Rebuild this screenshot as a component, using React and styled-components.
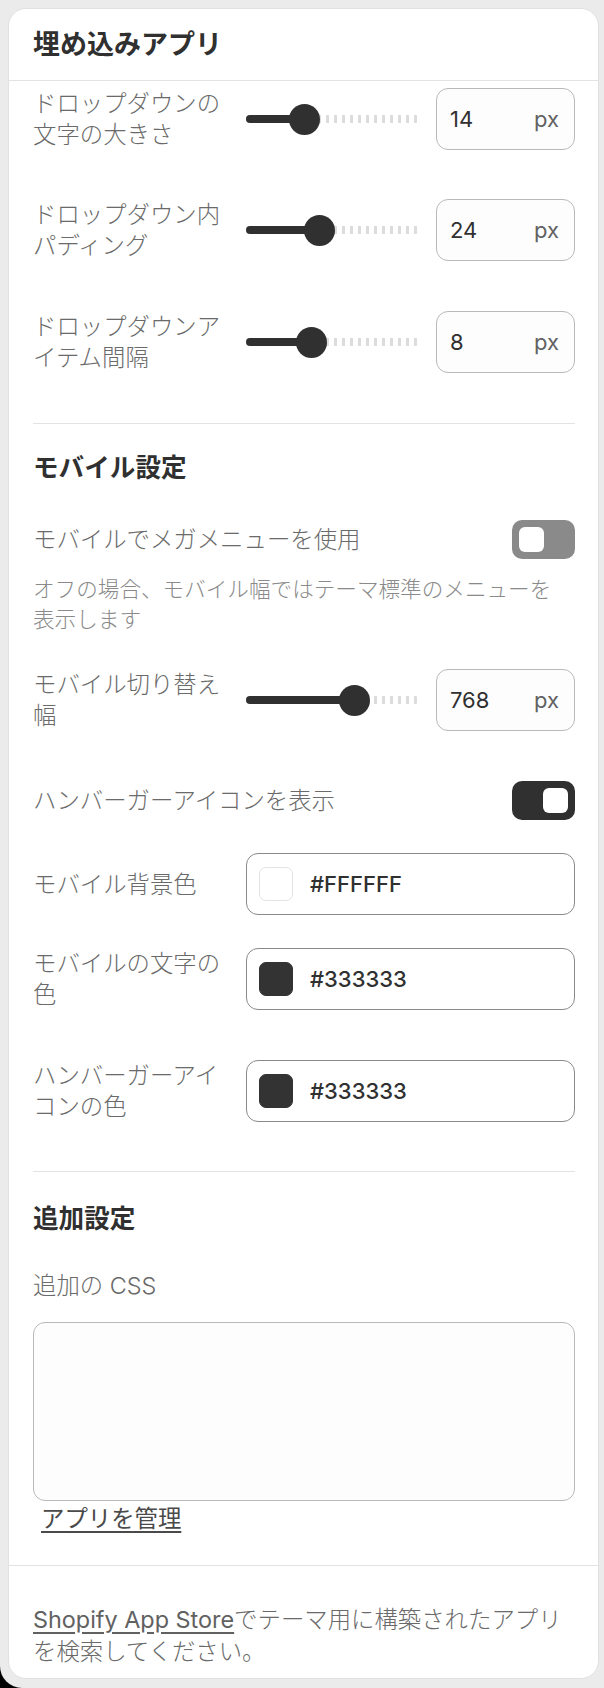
import React from 'react';
import styled, { createGlobalStyle } from 'styled-components';

const Global = createGlobalStyle`
  html, body { margin: 0; padding: 0; background: #000; }
  body {
    font-family: Inter, "Noto Sans CJK JP", sans-serif;
    -webkit-font-smoothing: antialiased;
  }
  * { box-sizing: border-box; }
`;

const Page = styled.div`
  width: 604px;
  height: 1688px;
  background: #ebebeb;
  border-bottom-left-radius: 22px;
  padding: 8px 0 0 8px;
  overflow: hidden;
`;

const Card = styled.div`
  width: 591px;
  background: #fff;
  border: 1px solid #e1e1e1;
  border-radius: 18px;
  overflow: hidden;
`;

const Header = styled.div`
  height: 72px;
  display: flex;
  align-items: center;
  padding: 0 23px 0 24px;
  border-bottom: 1px solid #e3e3e3;
`;

const Title = styled.h1`
  margin: 0;
  font-size: 27px;
  line-height: 36px;
  font-weight: 700;
  color: #303030;
`;

const Body = styled.div`
  padding: 7px 23px 31px 24px;
  display: flex;
  flex-direction: column;
`;

const Row = styled.div`
  display: flex;
  align-items: center;
  margin-top: ${(p) => p.$mt || 0}px;
  min-height: ${(p) => p.$h || 0}px;
`;

const SpreadRow = styled(Row)`
  justify-content: space-between;
`;

const Label = styled.div`
  flex: none;
  width: ${(p) => (p.$full ? 'auto' : '200px')};
  font-size: 23.4px;
  line-height: 31px;
  font-weight: 300;
  color: #6a6a6a;
`;

const Control = styled.div`
  flex: 1;
  margin-left: 13px;
  display: flex;
  align-items: center;
`;

const SliderTrack = styled.div`
  position: relative;
  flex: 1;
  height: 30px;
`;

const SliderRail = styled.div`
  position: absolute;
  left: 0;
  right: 0;
  top: 11px;
  height: 8px;
  border-radius: 4px;
  background: repeating-linear-gradient(
    to right,
    #dcdcdc 0 3px,
    transparent 3px 8px
  );
`;

const SliderFill = styled.div`
  position: absolute;
  left: 0;
  top: 11px;
  height: 8px;
  border-radius: 4px;
  background: #303030;
`;

const SliderThumb = styled.div`
  position: absolute;
  top: 0;
  width: 31px;
  height: 31px;
  margin-left: -15.5px;
  border-radius: 50%;
  background: #303030;
`;

const NumberBox = styled.div`
  flex: none;
  width: 139px;
  height: 62px;
  margin-left: 17px;
  padding: 0 15px 0 13px;
  display: flex;
  align-items: center;
  justify-content: space-between;
  border: 1px solid #b9b9b9;
  border-radius: 12px;
  background: #fdfdfd;
`;

const NumberValue = styled.span`
  font-size: 22px;
  color: #303030;
`;

const Unit = styled.span`
  font-size: 22px;
  color: #616161;
`;

const Toggle = styled.div`
  flex: none;
  width: 63px;
  height: 39px;
  padding: 0 7px;
  border-radius: 10px;
  display: flex;
  align-items: center;
  justify-content: ${(p) => (p.$on ? 'flex-end' : 'flex-start')};
  background: ${(p) => (p.$on ? '#303030' : '#8a8a8a')};
`;

const Knob = styled.div`
  width: 25px;
  height: 25px;
  border-radius: 6px;
  background: #fff;
`;

const Helper = styled.div`
  margin-top: ${(p) => p.$mt || 0}px;
  font-size: 21.6px;
  line-height: 30px;
  font-weight: 300;
  color: #8a8a8a;
`;

const ColorBox = styled.div`
  flex: 1;
  height: 62px;
  margin-left: 13px;
  padding: 0 12px;
  display: flex;
  align-items: center;
  gap: 17px;
  border: 1.5px solid #8a8a8a;
  border-radius: 12px;
  background: #fff;
`;

const Swatch = styled.div`
  width: 34px;
  height: 34px;
  border-radius: 7px;
  background: ${(p) => p.$color};
  border: 1px solid ${(p) => (p.$color === '#FFFFFF' ? '#e3e3e3' : p.$color)};
`;

const Hex = styled.span`
  font-size: 22px;
  font-weight: 500;
  color: #303030;
`;

const Divider = styled.div`
  height: 1px;
  margin-top: ${(p) => p.$mt || 0}px;
  background: #e3e3e3;
`;

const Heading = styled.h2`
  margin: ${(p) => p.$mt || 0}px 0 0;
  font-size: 25.6px;
  line-height: 36px;
  font-weight: 700;
  color: #303030;
`;

const FieldLabel = styled.div`
  margin-top: ${(p) => p.$mt || 0}px;
  font-size: 23.4px;
  line-height: 31px;
  font-weight: 300;
  color: #6a6a6a;
`;

const CssArea = styled.textarea`
  display: block;
  width: 100%;
  height: 179px;
  margin-top: 21px;
  border: 1px solid #b9b9b9;
  border-radius: 12px;
  background: #fdfdfd;
  resize: none;
  outline: none;
  font: inherit;
`;

const ManageLink = styled.a`
  align-self: flex-start;
  margin: 2px 0 0 8px;
  font-size: 23.4px;
  line-height: 31px;
  color: #4a4a4a;
  text-decoration: underline;
  text-underline-offset: 4px;
`;

const Footer = styled.div`
  border-top: 1px solid #e3e3e3;
  padding: 38px 23px 10px 24px;
`;

const FooterText = styled.p`
  margin: 0;
  font-size: 23.4px;
  line-height: 32px;
  font-weight: 300;
  color: #6a6a6a;
`;

const StoreLink = styled.a`
  color: #616161;
  font-weight: 400;
  text-decoration: underline;
  text-underline-offset: 4px;
`;

const Slider = ({ pos }) => (
  <SliderTrack>
    <SliderRail />
    <SliderFill style={{ width: pos }} />
    <SliderThumb style={{ left: pos }} />
  </SliderTrack>
);

const SliderSetting = ({ label, value, pos, mt }) => (
  <Row $mt={mt} $h={62}>
    <Label>{label}</Label>
    <Control>
      <Slider pos={pos} />
      <NumberBox>
        <NumberValue>{value}</NumberValue>
        <Unit>px</Unit>
      </NumberBox>
    </Control>
  </Row>
);

const ToggleSetting = ({ label, on, mt }) => (
  <SpreadRow $mt={mt} $h={39}>
    <Label $full>{label}</Label>
    <Toggle $on={on}>
      <Knob />
    </Toggle>
  </SpreadRow>
);

const ColorSetting = ({ label, color, mt }) => (
  <Row $mt={mt} $h={62}>
    <Label>{label}</Label>
    <ColorBox>
      <Swatch $color={color} />
      <Hex>{color}</Hex>
    </ColorBox>
  </Row>
);

export default function App() {
  return (
    <>
      <Global />
      <Page>
        <Card>
          <Header>
            <Title>埋め込みアプリ</Title>
          </Header>
          <Body>
            <SliderSetting label={<>ドロップダウンの<br />文字の大きさ</>} value="14" pos={58} mt={0} />
            <SliderSetting label={<>ドロップダウン内<br />パディング</>} value="24" pos={73} mt={49} />
            <SliderSetting label={<>ドロップダウンア<br />イテム間隔</>} value="8" pos={65} mt={50} />

            <Divider $mt={50} />
            <Heading $mt={26}>モバイル設定</Heading>
            <ToggleSetting label="モバイルでメガメニューを使用" on={false} mt={34} />
            <Helper $mt={15}>
              オフの場合、モバイル幅ではテーマ標準のメニューを<br />表示します
            </Helper>
            <SliderSetting label={<>モバイル切り替え<br />幅</>} value="768" pos={108} mt={35} />
            <ToggleSetting label="ハンバーガーアイコンを表示" on mt={50} />
            <ColorSetting label="モバイル背景色" color="#FFFFFF" mt={33} />
            <ColorSetting label={<>モバイルの文字の<br />色</>} color="#333333" mt={33} />
            <ColorSetting label={<>ハンバーガーアイ<br />コンの色</>} color="#333333" mt={50} />

            <Divider $mt={49} />
            <Heading $mt={29}>追加設定</Heading>
            <FieldLabel $mt={33}>追加の CSS</FieldLabel>
            <CssArea readOnly />
            <ManageLink href="#">アプリを管理</ManageLink>
          </Body>
          <Footer>
            <FooterText>
              <StoreLink href="#">Shopify App Store</StoreLink>でテーマ用に構築されたアプリ<br />を検索してください。
            </FooterText>
          </Footer>
        </Card>
      </Page>
    </>
  );
}
